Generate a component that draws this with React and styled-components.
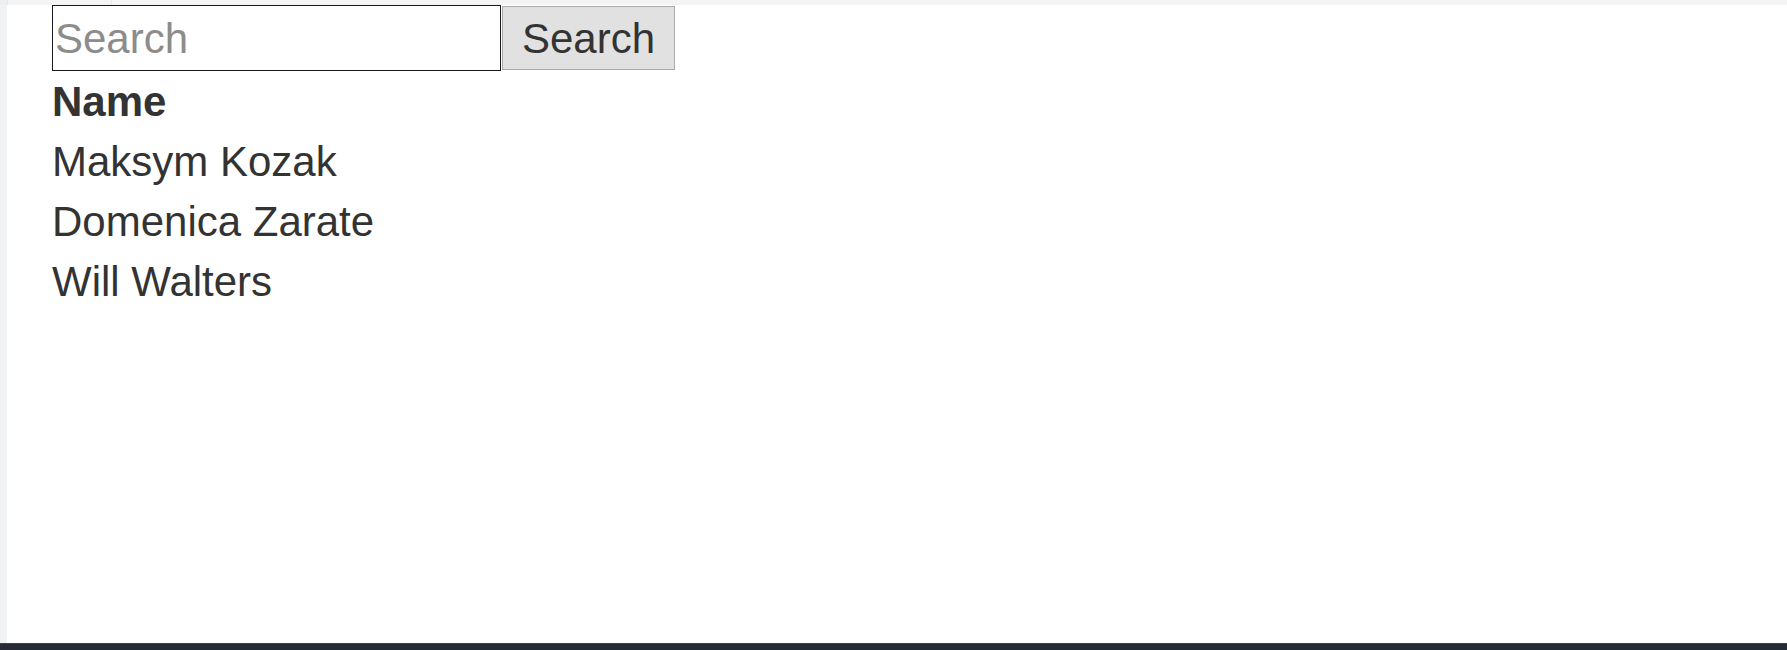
import React from "react";
import styled, { createGlobalStyle } from "styled-components";

const Global = createGlobalStyle`
  html, body { margin: 0; padding: 0; background: #ffffff; }
  body { font-family: "Liberation Sans", Arial, sans-serif; }
  #root { height: 650px; }
`;

const Frame = styled.div`
  height: 650px;
  display: flex;
  flex-direction: column;
  overflow: hidden;
`;

const TopStrip = styled.div`
  height: 5px;
  flex: none;
  background: #f3f4f6;
  display: flex;
`;

const TopTab = styled.div`
  width: ${(p) => p.$w}px;
  flex: none;
  background: ${(p) => p.$bg || "#f3f4f6"};
  border-right: 1px solid #e6e8eb;
`;

const Body = styled.div`
  flex: 1;
  display: flex;
  min-height: 0;
`;

const SideStrip = styled.div`
  width: 7px;
  flex: none;
  background: #f1f2f4;
`;

const Content = styled.main`
  flex: 1;
  padding-left: 45px;
  background: #ffffff;
  color: #333333;
`;

const SearchBar = styled.form`
  display: flex;
  align-items: center;
  gap: 1px;
  height: 66px;
`;

const SearchInput = styled.input`
  box-sizing: border-box;
  width: 449px;
  height: 66px;
  margin: 0;
  padding: 2px 2px 0;
  border: 1.5px solid #1a1a1a;
  font-family: "Liberation Sans", Arial, sans-serif;
  font-size: 42px;
  color: #333;
  background: #fff;
  outline: none;
  &::placeholder { color: #8c8c8c; }
`;

const SearchButton = styled.button`
  box-sizing: border-box;
  width: 173px;
  height: 64px;
  margin: 0;
  padding: 2px 0 0;
  border: 1px solid #a9a9a9;
  background: #e1e1e1;
  font-family: "Liberation Sans", Arial, sans-serif;
  font-size: 42px;
  color: #333;
  cursor: pointer;
`;

const NameList = styled.div`
  margin-top: 1px;
  display: flex;
  flex-direction: column;
`;

const NameCell = styled.div`
  font-size: 42px;
  line-height: 60px;
  font-weight: ${(p) => (p.$head ? 700 : 400)};
  color: #333333;
`;

const BottomBar = styled.div`
  height: 6px;
  flex: none;
  background: #272b36;
  border-top: 1px solid #3b404b;
`;

const people = ["Maksym Kozak", "Domenica Zarate", "Will Walters"];

export default function App() {
  return (
    <>
      <Global />
      <Frame>
        <TopStrip>
          <TopTab $w={7} $bg="#eceef1" />
          <TopTab $w={103} />
        </TopStrip>
        <Body>
          <SideStrip />
          <Content>
            <SearchBar onSubmit={(e) => e.preventDefault()}>
              <SearchInput placeholder="Search" />
              <SearchButton type="submit">Search</SearchButton>
            </SearchBar>
            <NameList>
              <NameCell $head>Name</NameCell>
              {people.map((n) => (
                <NameCell key={n}>{n}</NameCell>
              ))}
            </NameList>
          </Content>
        </Body>
        <BottomBar />
      </Frame>
    </>
  );
}
